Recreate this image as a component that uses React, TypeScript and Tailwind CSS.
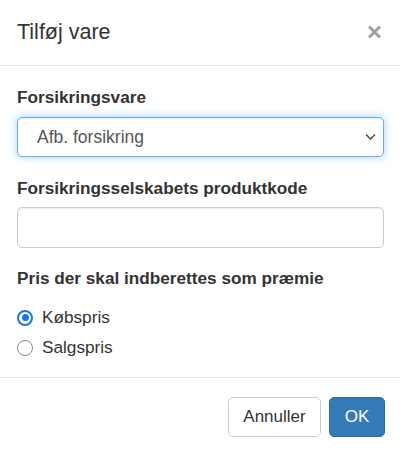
import { useState } from 'react';

const labelClass = 'block text-[17.2px] font-bold leading-[23px] text-[#333]';

const fieldClass = 'w-full rounded-[5px] border bg-white text-[17px] text-[#555] outline-none';

const products = [{ value: 'afb', label: 'Afb. forsikring' }];

export default function App() {
  const [product, setProduct] = useState('afb');
  const [code, setCode] = useState('');
  const [price, setPrice] = useState<'koeb' | 'salg'>('koeb');

  const productLabel = products.find((p) => p.value === product)?.label ?? '';

  return (
    <div
      className="w-[400px] h-[454px] bg-white text-[#333] overflow-hidden"
      style={{ fontFamily: '"Liberation Sans", Arial, Helvetica, sans-serif' }}
    >
      {/* Header */}
      <div className="flex items-center justify-between h-[66px] pl-[17px] pr-[18px] border-b border-[#e5e5e5]">
        <h2 className="text-[21.5px] leading-[30px] text-[#333] pb-[2px]">Tilføj vare</h2>
        <button className="text-[#a0a0a0] pb-[1px]" aria-label="Luk">
          <svg width="15" height="14" viewBox="0 0 15 14">
            <path d="M2 1.5 L13 12.5 M13 1.5 L2 12.5" stroke="currentColor" strokeWidth="3" />
          </svg>
        </button>
      </div>

      {/* Body */}
      <div className="pt-[20px] pb-[18px] pl-[17px] pr-[16px]">
        <div>
          <label className={labelClass + ' mb-[8px]'}>Forsikringsvare</label>
          <div className="relative h-[40px] rounded-[5px] border border-[#66afe9] bg-white shadow-[inset_0_1px_1px_rgba(0,0,0,0.075),0_0_8px_rgba(102,175,233,0.6)]">
            <div className="flex h-full items-center justify-between pl-[19px] pr-[7px] pointer-events-none">
              <span className="text-[17.5px] text-[#555]">{productLabel}</span>
              <svg className="text-[#555]" width="11" height="8" viewBox="0 0 11 8">
                <path d="M1 1.5 L5.5 6 L10 1.5" fill="none" stroke="currentColor" strokeWidth="1.6" />
              </svg>
            </div>
            <select
              value={product}
              onChange={(e) => setProduct(e.target.value)}
              className="absolute inset-0 w-full h-full opacity-0 cursor-pointer"
            >
              {products.map((p) => (
                <option key={p.value} value={p.value}>
                  {p.label}
                </option>
              ))}
            </select>
          </div>
        </div>

        <div className="mt-[20px]">
          <label className={labelClass + ' mb-[7px]'}>Forsikringsselskabets produktkode</label>
          <input
            type="text"
            value={code}
            onChange={(e) => setCode(e.target.value)}
            className={fieldClass + ' h-[41px] px-[14px] border-[#ccc] shadow-[inset_0_1px_1px_rgba(0,0,0,0.075)]'}
          />
        </div>

        <div className="mt-[19px]">
          <label className={labelClass}>Pris der skal indberettes som præmie</label>
          <div className="mt-[16px] flex flex-col gap-[7px]">
            {[
              { id: 'koeb' as const, text: 'Købspris' },
              { id: 'salg' as const, text: 'Salgspris' },
            ].map((opt) => {
              const checked = price === opt.id;
              return (
                <label
                  key={opt.id}
                  onClick={() => setPrice(opt.id)}
                  className="flex items-center h-[23px] cursor-pointer"
                >
                  <span
                    className={
                      'w-[16px] h-[16px] rounded-full flex items-center justify-center ' +
                      (checked ? 'border-[2px] border-[#1a73f0]' : 'border-[1.5px] border-[#8a8a8a]')
                    }
                  >
                    {checked && <span className="w-[7px] h-[7px] rounded-full bg-[#1a73f0]" />}
                  </span>
                  <span className="ml-[9px] text-[17.2px] leading-[23px] text-[#333]">{opt.text}</span>
                </label>
              );
            })}
          </div>
        </div>
      </div>

      {/* Footer */}
      <div className="flex justify-end gap-[8px] border-t border-[#e5e5e5] pt-[19px] pl-[17px] pr-[15px]">
        <button className="h-[40px] w-[93px] rounded-[5px] border border-[#ccc] bg-white text-[17px] text-[#333]">
          Annuller
        </button>
        <button className="h-[40px] w-[56px] rounded-[5px] border border-[#2e6da4] bg-[#337ab7] text-[17px] text-white">
          OK
        </button>
      </div>
    </div>
  );
}
